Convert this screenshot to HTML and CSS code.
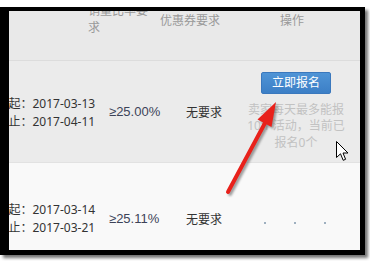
FILE: index.html
```html
<!DOCTYPE html>
<html lang="zh-CN">
<head>
<meta charset="utf-8">
<link rel="stylesheet" href="styles.css">
</head>
<body>
<div class="frame">
  <div class="table">
    <div class="row head">
      <div class="c c1"></div>
      <div class="c c2"><span class="h-two">销量比率要求</span></div>
      <div class="c c3"><span class="h-one">优惠券要求</span></div>
      <div class="c c4"><span class="h-one h-op">操作</span></div>
    </div>
    <div class="row r1">
      <div class="c c1">
        <div class="dates">
          <div>起：2017-03-13</div>
          <div>止：2017-04-11</div>
        </div>
      </div>
      <div class="c c2"><span class="pct">≥25.00%</span></div>
      <div class="c c3"><span class="req">无要求</span></div>
      <div class="c c4">
        <div class="act">
          <button class="btn">立即报名</button>
          <p class="tip">卖家每天最多能报<br>10个活动，当前已<br>报名0个</p>
        </div>
      </div>
    </div>
    <div class="row r2">
      <div class="c c1">
        <div class="dates">
          <div>起：2017-03-14</div>
          <div>止：2017-03-21</div>
        </div>
      </div>
      <div class="c c2"><span class="pct">≥25.11%</span></div>
      <div class="c c3"><span class="req">无要求</span></div>
      <div class="c c4">
        <div class="dots"><i></i><i></i><i></i></div>
      </div>
    </div>
  </div>
</div>
<svg class="arrow" width="370" height="261" viewBox="0 0 370 261">
  <defs>
    <filter id="blur" x="-20%" y="-20%" width="140%" height="140%"><feGaussianBlur stdDeviation="1.2"/></filter>
  </defs>
  <g transform="translate(2,2)" fill="#555" stroke="#555" opacity="0.55" filter="url(#blur)">
    <line x1="228" y1="192" x2="265" y2="123" stroke-width="4" stroke-linecap="round"/>
    <polygon points="276,102 271.5,127 257.5,119.5" stroke="none"/>
  </g>
  <line x1="228" y1="192" x2="265" y2="123" stroke="#e8211b" stroke-width="4" stroke-linecap="round"/>
  <polygon points="276,102 271.5,127 257.5,119.5" fill="#e8211b"/>
</svg>
<svg class="cursor" width="14" height="21" viewBox="0 0 14 21">
  <path d="M0.5 0.5 L0.5 16.5 L4.5 12.8 L7.2 19.3 L9.6 18.3 L7 12 L12 12 Z" fill="#fff" stroke="#000" stroke-width="1" stroke-linejoin="miter"/>
</svg>
</body>
</html>
```

FILE: styles.css
```css
html, body {
  margin: 0;
  padding: 0;
  background: #fff;
}
body {
  width: 370px;
  height: 261px;
  overflow: hidden;
  position: relative;
  font-family: "Noto Sans", "Noto Sans CJK SC", sans-serif;
  font-size: 12px;
  color: #333;
}
.frame {
  margin-top: 7px;
  width: 351px;
  height: 239px;
  border-style: solid;
  border-color: #000;
  border-width: 4px 5px 5px 9px;
  overflow: hidden;
  box-shadow: 3px 3px 3px rgba(0, 0, 0, 0.55);
}
.table {
  display: flex;
  flex-direction: column;
}
.row {
  display: grid;
  grid-template-columns: 79px 72px 80px 112px 8px;
}
.head {
  height: 49px;
  background: #e9e9e9;
  border-bottom: 1px solid #dcdcdc;
  color: #9a9a9a;
  line-height: 17px;
}
.r1 {
  height: 101px;
  background: #ebebeb;
  border-bottom: 1px solid #e2e2e2;
}
.r2 {
  height: 111px;
  background: #f9f9f9;
}
.c {
  display: flex;
  align-items: center;
  min-width: 0;
}
.head .c {
  align-items: flex-start;
}
.h-two {
  display: block;
  width: 62px;
  margin-top: -9.5px;
}
.h-one {
  display: block;
  margin-top: 0.5px;
  white-space: nowrap;
}
.head .c4 {
  justify-content: flex-start;
}
.h-op {
  margin-left: 40px;
}
.dates {
  margin-left: -0.5px;
  line-height: 18px;
  white-space: nowrap;
  color: #333;
}
.r1 .dates {
  margin-top: 3px;
}
.pct {
  margin-left: 21px;
  font-family: "Liberation Sans", "Noto Sans", sans-serif;
  font-size: 13px;
  color: #3c4358;
  white-space: nowrap;
}
.req {
  margin-left: 26px;
  white-space: nowrap;
  color: #333;
}
.c4 {
  justify-content: center;
}
.act {
  display: flex;
  flex-direction: column;
  align-items: center;
}
.btn {
  width: 70px;
  height: 22px;
  padding: 0;
  border: 1px solid #3a78bd;
  border-radius: 2px;
  background: linear-gradient(#4f94d6, #3c7fc6);
  color: #fff;
  font-family: inherit;
  font-size: 12px;
  line-height: 20px;
}
.tip {
  margin: 8px 0 0;
  width: 100px;
  text-align: center;
  line-height: 16.5px;
  color: #c2c2c2;
}
.dots {
  display: flex;
  gap: 28px;
  margin-left: -2px;
  margin-top: 8px;
}
.dots i {
  display: block;
  width: 2px;
  height: 2px;
  background: #9fb0c0;
}
.arrow {
  position: absolute;
  left: 0;
  top: 0;
  pointer-events: none;
}
.cursor {
  position: absolute;
  left: 336px;
  top: 141px;
}
```
